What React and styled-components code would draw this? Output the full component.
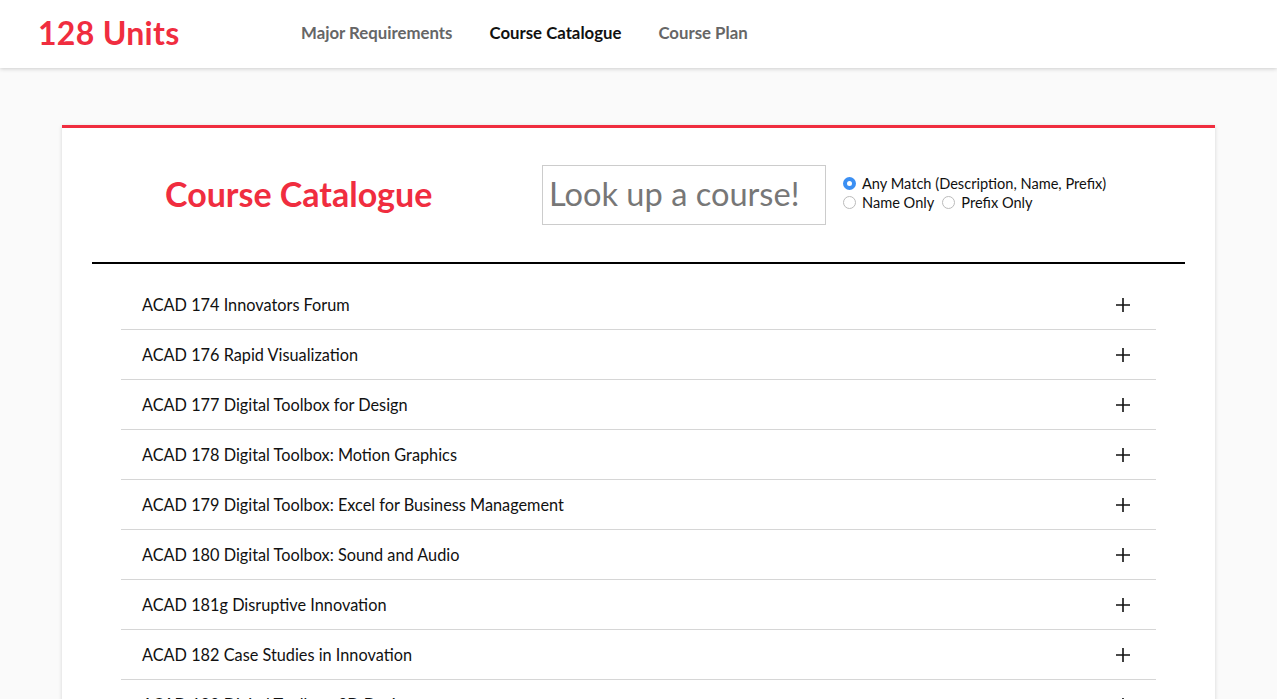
import styled, { createGlobalStyle } from "styled-components";

const GlobalStyle = createGlobalStyle`
  body {
    margin: 0;
    background: #fafafa;
    font-family: Lato, "Noto Sans", sans-serif;
  }
`;

const Header = styled.header`
  display: flex;
  align-items: center;
  height: 68px;
  padding: 0 38px 4px;
  box-sizing: border-box;
  background: #fff;
  box-shadow: 0 1px 4px rgba(0, 0, 0, 0.18);
`;

const Logo = styled.div`
  color: #f02d3f;
  font-size: 32px;
  font-weight: 700;
  width: 263px;
  letter-spacing: 0.3px;
`;

const NavList = styled.ul`
  list-style: none;
  display: flex;
  gap: 37px;
  margin: 0;
  padding: 0;
`;

const NavLink = styled.a`
  font-size: 16.8px;
  font-weight: 700;
  text-decoration: none;
  color: ${(p) => (p.$active ? "#111" : "#666")};
`;

const Main = styled.main`
  padding: 57px 62px 0;
`;

const Card = styled.section`
  background: #fff;
  border-top: 3px solid #f02d3f;
  box-shadow: 0 1px 4px rgba(0, 0, 0, 0.15);
  padding: 0 30px;
  min-height: 600px;
`;

const Top = styled.div`
  display: flex;
  align-items: center;
  height: 134px;
  border-bottom: 2px solid #000;
  padding-left: 73px;
`;

const Title = styled.h1`
  margin: 0 0 4px;
  color: #f02d3f;
  font-size: 34px;
  font-weight: 700;
  width: 377px;
`;

const Search = styled.input`
  box-sizing: border-box;
  width: 284px;
  height: 60px;
  border: 1px solid #ccc;
  padding: 0 6px 4px;
  font-family: inherit;
  font-size: 32.6px;
  color: #333;
  margin-right: 17px;

  &::placeholder {
    color: #777;
  }
`;

const Options = styled.div`
  display: flex;
  flex-direction: column;
  gap: 2px;
  font-size: 14.6px;
  color: #111;
  margin-bottom: 4px;
`;

const OptionRow = styled.div`
  display: flex;
  gap: 8px;
`;

const Option = styled.label`
  display: flex;
  align-items: center;
  gap: 6px;
`;

const Radio = styled.span`
  box-sizing: border-box;
  width: 13px;
  height: 13px;
  border-radius: 50%;
  border: ${(p) => (p.$checked ? "4px solid #3b8ff3" : "1px solid #bbb")};
  background: #fff;
`;

const List = styled.ul`
  list-style: none;
  margin: 0;
  padding: 16px 29px 0;
`;

const Row = styled.li`
  display: flex;
  align-items: center;
  justify-content: space-between;
  height: 49px;
  padding: 0 26px 0 21px;
  border-bottom: 1px solid #d6d6d6;
  font-size: 16.3px;
  color: #111;
`;

const Plus = styled.svg`
  width: 14px;
  height: 14px;
`;

const courses = [
  "ACAD 174 Innovators Forum",
  "ACAD 176 Rapid Visualization",
  "ACAD 177 Digital Toolbox for Design",
  "ACAD 178 Digital Toolbox: Motion Graphics",
  "ACAD 179 Digital Toolbox: Excel for Business Management",
  "ACAD 180 Digital Toolbox: Sound and Audio",
  "ACAD 181g Disruptive Innovation",
  "ACAD 182 Case Studies in Innovation",
  "ACAD 183 Digital Toolbox: 3D Design",
];

export default function App() {
  return (
    <>
      <GlobalStyle />
      <Header>
        <Logo>128 Units</Logo>
        <nav>
          <NavList>
            <li>
              <NavLink href="#">Major Requirements</NavLink>
            </li>
            <li>
              <NavLink href="#" $active>
                Course Catalogue
              </NavLink>
            </li>
            <li>
              <NavLink href="#">Course Plan</NavLink>
            </li>
          </NavList>
        </nav>
      </Header>

      <Main>
        <Card>
          <Top>
            <Title>Course Catalogue</Title>
            <Search placeholder="Look up a course!" />
            <Options>
              <Option>
                <Radio $checked />
                Any Match (Description, Name, Prefix)
              </Option>
              <OptionRow>
                <Option>
                  <Radio />
                  Name Only
                </Option>
                <Option>
                  <Radio />
                  Prefix Only
                </Option>
              </OptionRow>
            </Options>
          </Top>

          <List>
            {courses.map((c) => (
              <Row key={c}>
                {c}
                <Plus viewBox="0 0 14 14">
                  <path d="M7 0v14M0 7h14" stroke="#111" strokeWidth="1.6" />
                </Plus>
              </Row>
            ))}
          </List>
        </Card>
      </Main>
    </>
  );
}
